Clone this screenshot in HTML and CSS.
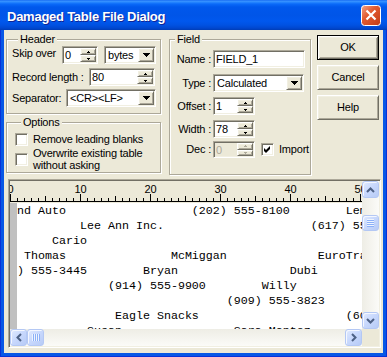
FILE: index.html
```html
<!DOCTYPE html>
<html>
<head>
<meta charset="utf-8">
<title>Damaged Table File Dialog</title>
<link rel="stylesheet" href="styles.css">
</head>
<body>
<div class="window">
  <div class="titlebar">
    <span class="title">Damaged Table File Dialog</span>
    <div class="close">
      <svg width="20" height="21" viewBox="0 0 20 21">
        <defs>
          <linearGradient id="cg" x1="0" y1="0" x2="1" y2="1">
            <stop offset="0" stop-color="#F2A58A"/>
            <stop offset="0.4" stop-color="#E25B31"/>
            <stop offset="1" stop-color="#C23B14"/>
          </linearGradient>
        </defs>
        <rect x="0.5" y="0.5" width="19" height="20" rx="3" fill="url(#cg)" stroke="#fff"/>
        <path d="M5.5 5.5 L14.5 14.5 M14.5 5.5 L5.5 14.5" stroke="#fff" stroke-width="2.2" fill="none"/>
      </svg>
    </div>
  </div>
  <div class="client">
    <div class="top">
      <div class="leftcol">
        <div class="group header">
          <span class="legend">Header</span>
          <div class="row r1">
            <span class="lbl l-skip">Skip over</span>
            <div class="edit e-skip"><span class="val">0</span><div class="spin"><i class="sb up"></i><i class="sb dn"></i></div></div>
            <div class="combo c-bytes"><span class="val">bytes</span><i class="dd"></i></div>
          </div>
          <div class="row r2">
            <span class="lbl l-rec">Record length :</span>
            <div class="edit e-rec"><span class="val">80</span><div class="spin"><i class="sb up"></i><i class="sb dn"></i></div></div>
          </div>
          <div class="row r3">
            <span class="lbl l-sep">Separator:</span>
            <div class="combo c-sep"><span class="val">&lt;CR&gt;&lt;LF&gt;</span><i class="dd"></i></div>
          </div>
        </div>
        <div class="group options">
          <span class="legend">Options</span>
          <div class="orow o1">
            <i class="chk"></i>
            <span class="olbl">Remove leading blanks</span>
          </div>
          <div class="orow o2">
            <i class="chk"></i>
            <span class="olbl">Overwrite existing table<br>without asking</span>
          </div>
        </div>
      </div>
      <div class="group field">
        <span class="legend">Field</span>
        <div class="frow f1">
          <span class="flbl">Name :</span>
          <div class="edit e-name"><span class="val">FIELD_1</span></div>
        </div>
        <div class="frow f2">
          <span class="flbl">Type :</span>
          <div class="combo c-type"><span class="val">Calculated</span><i class="dd"></i></div>
        </div>
        <div class="frow f3">
          <span class="flbl">Offset :</span>
          <div class="edit e-num"><span class="val">1</span><div class="spin"><i class="sb up"></i><i class="sb dn"></i></div></div>
        </div>
        <div class="frow f4">
          <span class="flbl">Width :</span>
          <div class="edit e-num"><span class="val">78</span><div class="spin"><i class="sb up"></i><i class="sb dn"></i></div></div>
        </div>
        <div class="frow f5">
          <span class="flbl">Dec :</span>
          <div class="edit e-num disabled"><span class="val">0</span><div class="spin"><i class="sb up"></i><i class="sb dn"></i></div></div>
          <i class="chk checked"><svg width="9" height="9" viewBox="0 0 9 9"><path d="M1 3 L3 5 L7 1 L7 4 L3 8 L1 6 Z" fill="#000"/></svg></i>
          <span class="ilbl">Import</span>
        </div>
      </div>
      <div class="buttons">
        <div class="btn def">OK</div>
        <div class="btn">Cancel</div>
        <div class="btn">Help</div>
      </div>
    </div>
    <div class="viewer">
      <div class="ruler">
        <svg width="352" height="22" viewBox="0 0 352 22">
          <defs>
            <pattern id="minor" width="7" height="22" patternUnits="userSpaceOnUse"><rect x="0" y="17" width="1" height="3" fill="#000"/></pattern>
            <pattern id="mid" width="35" height="22" patternUnits="userSpaceOnUse"><rect x="0" y="15" width="1" height="5" fill="#000"/></pattern>
            <pattern id="major" width="70" height="22" patternUnits="userSpaceOnUse"><rect x="0" y="13" width="1" height="7" fill="#000"/></pattern>
          </defs>
          <rect x="0" y="0" width="352" height="22" fill="url(#minor)"/>
          <rect x="0" y="0" width="352" height="22" fill="url(#mid)"/>
          <rect x="0" y="0" width="352" height="22" fill="url(#major)"/>
          <rect x="0" y="20" width="352" height="1" fill="#000"/>
          <g class="rnum">
            <text x="0.5" y="12">0</text>
            <text x="70.5" y="12">10</text>
            <text x="140.5" y="12">20</text>
            <text x="210.5" y="12">30</text>
            <text x="280.5" y="12">40</text>
            <text x="350.5" y="12">50</text>
          </g>
        </svg>
      </div>
      <div class="textarea">
        <div class="gutter"></div>
<pre class="text">nd Auto                  (202) 555-8100        Lemon Co
         Lee Ann Inc.                     (617) 555-2020
     Cario
 Thomas               McMiggan             EuroTrans
) 555-3445        Bryan                Dubi
             (914) 555-9900        Willy
                              (909) 555-3823
              Eagle Snacks                     (608) 555-1
          Susan                Sara Montez</pre>
      </div>
      <div class="vscroll">
        <div class="sbtn"><svg width="9" height="6" viewBox="0 0 9 6"><path d="M1 5 L4.5 1.5 L8 5" fill="none" stroke="#4D6185" stroke-width="2"/></svg></div>
        <div class="vtrack"><div class="sbtn vthumb"><i class="vgrip"></i></div></div>
        <div class="sbtn"><svg width="9" height="6" viewBox="0 0 9 6"><path d="M1 1 L4.5 4.5 L8 1" fill="none" stroke="#4D6185" stroke-width="2"/></svg></div>
      </div>
      <div class="hscroll">
        <div class="sbtn"><svg width="6" height="9" viewBox="0 0 6 9"><path d="M5 1 L1.5 4.5 L5 8" fill="none" stroke="#4D6185" stroke-width="2"/></svg></div>
        <div class="sbtn hthumb"><i class="hgrip"></i></div>
        <div class="htrack"></div>
        <div class="sbtn"><svg width="6" height="9" viewBox="0 0 6 9"><path d="M1 1 L4.5 4.5 L1 8" fill="none" stroke="#4D6185" stroke-width="2"/></svg></div>
      </div>
      <div class="corner"></div>
    </div>
  </div>
</div>
</body>
</html>
```

FILE: styles.css
```css
* { box-sizing: border-box; }
html, body { margin: 0; padding: 0; }
body {
  width: 387px;
  height: 357px;
  overflow: hidden;
  background: #0055E5;
  font-family: "Liberation Sans", Arial, sans-serif;
  font-size: 11px;
  line-height: 13px;
  color: #000;
}
i { font-style: normal; display: block; }

.window {
  width: 387px;
  height: 357px;
  display: flex;
  flex-direction: column;
  background: #0757E6;
  box-shadow: inset 1px 0 0 #0831D9, inset -1px 0 0 #0831D9, inset 0 -1px 0 #0831D9;
}

.titlebar {
  height: 30px;
  flex: none;
  display: flex;
  align-items: flex-start;
  padding-left: 7px;
  background: linear-gradient(to bottom,
    #0A5FEF 0px, #3D95FF 1px, #2A8AFF 2px, #0A6AF9 4px, #0058EC 7px,
    #0055E8 15px, #0058EE 21px, #0052E2 25px, #0047D0 28px, #003DB5 30px);
}
.title {
  margin-top: 9px;
  font-weight: bold;
  font-size: 13px;
  line-height: 15px;
  color: #fff;
  letter-spacing: -0.25px;
  text-shadow: 1px 1px 0 #0F2596;
  white-space: nowrap;
}
.close {
  margin-left: auto;
  margin-top: 5px;
  margin-right: 6px;
  width: 20px;
  height: 21px;
}
.close svg { display: block; }

.client {
  flex: 1;
  margin: 0 4px 4px 4px;
  background: #ECE9D8;
  letter-spacing: -0.2px;
}

.top {
  display: flex;
  align-items: flex-start;
  height: 145px;
}
.leftcol {
  margin-left: 2px;
  width: 155px;
  flex: none;
}

.group {
  border: 1px solid #ACA899;
  box-shadow: inset 1px 1px 0 #fff, 1px 1px 0 #fff;
}
.legend {
  display: block;
  width: max-content;
  margin: -7px 0 0 6px;
  padding: 0 2px;
  background: #ECE9D8;
  line-height: 13px;
}

.header {
  margin-top: 9px;
  height: 75px;
  padding-left: 5px;
}
.row {
  display: flex;
  align-items: center;
  height: 18px;
}
.header .r2 { margin-top: 4px; }
.header .r3 { margin-top: 3px; }
.lbl { flex: none; white-space: nowrap; }
.l-skip { width: 50px; margin-bottom: 3px; }
.l-rec { width: 77px; }
.l-sep { width: 54px; }

.edit, .combo {
  display: flex;
  flex: none;
  height: 18px;
  background: #fff;
  border: 1px solid;
  border-color: #ACA899 #fff #fff #ACA899;
  box-shadow: inset 1px 1px 0 #716F64, inset -1px -1px 0 #F1EFE2;
  padding: 1px;
}
.val {
  flex: 1;
  line-height: 14px;
  padding-left: 1px;
  white-space: nowrap;
  overflow: hidden;
}
.combo .val { padding-left: 2px; }

.e-skip { width: 36px; }
.c-bytes { width: 52px; margin-left: 6px; }
.e-rec { width: 66px; }
.c-sep { width: 90px; }
.e-name { width: 92px; }
.c-type { width: 91px; }
.e-num { width: 42px; }

.spin {
  width: 16px;
  flex: none;
  display: flex;
  flex-direction: column;
}
.sb {
  flex: 1;
  display: flex;
  align-items: center;
  justify-content: center;
  background: #ECE9D8;
  border: 1px solid;
  border-color: #fff #716F64 #716F64 #fff;
  box-shadow: inset 1px 1px 0 #F1EFE2, inset -1px -1px 0 #ACA899;
}
.sb::after {
  content: "";
  display: block;
  width: 3px;
  height: 2px;
}
.sb.up::after {
  background:
    linear-gradient(#000, #000) 1px 0 / 1px 1px no-repeat,
    linear-gradient(#000, #000) 0 1px / 3px 1px no-repeat;
}
.sb.dn::after {
  background:
    linear-gradient(#000, #000) 0 0 / 3px 1px no-repeat,
    linear-gradient(#000, #000) 1px 1px / 1px 1px no-repeat;
}
.disabled { background: #ECE9D8; }
.disabled .val { color: #ACA899; }
.disabled .sb.up::after {
  background:
    linear-gradient(#ACA899, #ACA899) 1px 0 / 1px 1px no-repeat,
    linear-gradient(#ACA899, #ACA899) 0 1px / 3px 1px no-repeat;
}
.disabled .sb.dn::after {
  background:
    linear-gradient(#ACA899, #ACA899) 0 0 / 3px 1px no-repeat,
    linear-gradient(#ACA899, #ACA899) 1px 1px / 1px 1px no-repeat;
}

.dd {
  width: 16px;
  flex: none;
  display: flex;
  align-items: center;
  justify-content: center;
  background: #ECE9D8;
  border: 1px solid;
  border-color: #fff #716F64 #716F64 #fff;
  box-shadow: inset 1px 1px 0 #F1EFE2, inset -1px -1px 0 #ACA899;
}
.dd::after {
  content: "";
  display: block;
  width: 7px;
  height: 4px;
  background:
    linear-gradient(#000, #000) 0 0 / 7px 1px no-repeat,
    linear-gradient(#000, #000) 1px 1px / 5px 1px no-repeat,
    linear-gradient(#000, #000) 2px 2px / 3px 1px no-repeat,
    linear-gradient(#000, #000) 3px 3px / 1px 1px no-repeat;
}

.options {
  margin-top: 8px;
  height: 51px;
  padding-left: 8px;
}
.orow {
  display: flex;
  align-items: center;
}
.o1 { margin-top: 4px; height: 13px; }
.o2 { margin-top: 1px; }
.olbl { margin-left: 5px; white-space: nowrap; }
.o2 .olbl { line-height: 12px; }

.chk {
  width: 13px;
  height: 13px;
  flex: none;
  background: #fff;
  border: 1px solid;
  border-color: #ACA899 #fff #fff #ACA899;
  box-shadow: inset 1px 1px 0 #716F64, inset -1px -1px 0 #F1EFE2;
  padding: 1px;
}
.chk svg { display: block; }

.field {
  margin-left: 8px;
  margin-top: 9px;
  width: 142px;
  height: 136px;
  flex: none;
}
.field .legend { margin-left: 5px; }
.frow {
  display: flex;
  align-items: center;
  height: 18px;
}
.f1 { margin-top: 4px; }
.f2 { margin-top: 6px; }
.f3 { margin-top: 5px; }
.f4 { margin-top: 5px; }
.f5 { margin-top: 3px; height: 17px; }
.f5 .edit { height: 17px; }
.flbl {
  width: 41px;
  margin-right: 2px;
  text-align: right;
  flex: none;
  white-space: nowrap;
}
.f5 .chk { margin-left: 6px; }
.ilbl { margin-left: 5px; }

.buttons {
  margin-left: 6px;
  margin-top: 5px;
  width: 62px;
  flex: none;
  display: flex;
  flex-direction: column;
  gap: 5px;
}
.btn {
  height: 25px;
  display: flex;
  align-items: center;
  justify-content: center;
  background: #ECE9D8;
  border: 1px solid;
  border-color: #fff #716F64 #716F64 #fff;
  box-shadow: inset 1px 1px 0 #F1EFE2, inset -1px -1px 0 #ACA899;
}
.btn.def {
  border-color: #000;
  box-shadow: inset 1px 1px 0 #fff, inset -1px -1px 0 #716F64, inset 2px 2px 0 #F1EFE2, inset -2px -2px 0 #ACA899;
}

.viewer {
  margin: 4px 0 0 4px;
  width: 373px;
  height: 169px;
  border: 1px solid;
  border-color: #ACA899 #fff #fff #ACA899;
  box-shadow: inset 1px 1px 0 #716F64, inset -1px -1px 0 #F1EFE2;
  padding: 1px;
  display: grid;
  grid-template-columns: 352px 17px;
  grid-template-rows: 22px 126px 17px;
}
.ruler {
  grid-column: 1;
  grid-row: 1;
  background: #ECE9D8;
  overflow: hidden;
}
.ruler svg { display: block; }
.rnum text {
  font-family: "Liberation Sans", Arial, sans-serif;
  font-size: 11px;
  letter-spacing: 0;
  text-anchor: middle;
  fill: #000;
}
.textarea {
  grid-column: 1;
  grid-row: 2;
  display: flex;
  background: #fff;
  overflow: hidden;
}
.gutter {
  width: 7px;
  flex: none;
  background: #C0C0C0;
}
.text {
  margin: 0;
  padding-top: 1px;
  flex: 1;
  min-width: 0;
  font-family: "Liberation Mono", "Courier New", monospace;
  font-size: 11.67px;
  line-height: 15px;
  letter-spacing: 0;
  white-space: pre;
  overflow: hidden;
  color: #000;
}

.vscroll {
  grid-column: 2;
  grid-row: 1 / 3;
  display: flex;
  flex-direction: column;
  background: linear-gradient(to right, #EEEDE5, #FBFBF8);
}
.vtrack { flex: 1; }
.hscroll {
  grid-column: 1;
  grid-row: 3;
  display: flex;
  background: linear-gradient(#EEEDE5, #FBFBF8);
}
.htrack { flex: 1; }
.corner {
  grid-column: 2;
  grid-row: 3;
  background: #ECE9D8;
}

.sbtn {
  width: 17px;
  height: 17px;
  flex: none;
  display: flex;
  align-items: center;
  justify-content: center;
  border: 1px solid #B4C8F4;
  border-radius: 3px;
  background: linear-gradient(135deg, #E1EAFE 0%, #C9D9FD 45%, #B7CBF6 100%);
  box-shadow: inset 1px 1px 0 #F4F7FF;
}
.sbtn svg { display: block; }
.vthumb { margin-top: 17px; height: 16px; }
.vgrip {
  width: 7px;
  height: 8px;
  background: repeating-linear-gradient(to bottom, #EEF4FE 0 1px, #8CB0F8 1px 2px);
}
.hgrip {
  width: 8px;
  height: 7px;
  background: repeating-linear-gradient(to right, #EEF4FE 0 1px, #8CB0F8 1px 2px);
}
```
